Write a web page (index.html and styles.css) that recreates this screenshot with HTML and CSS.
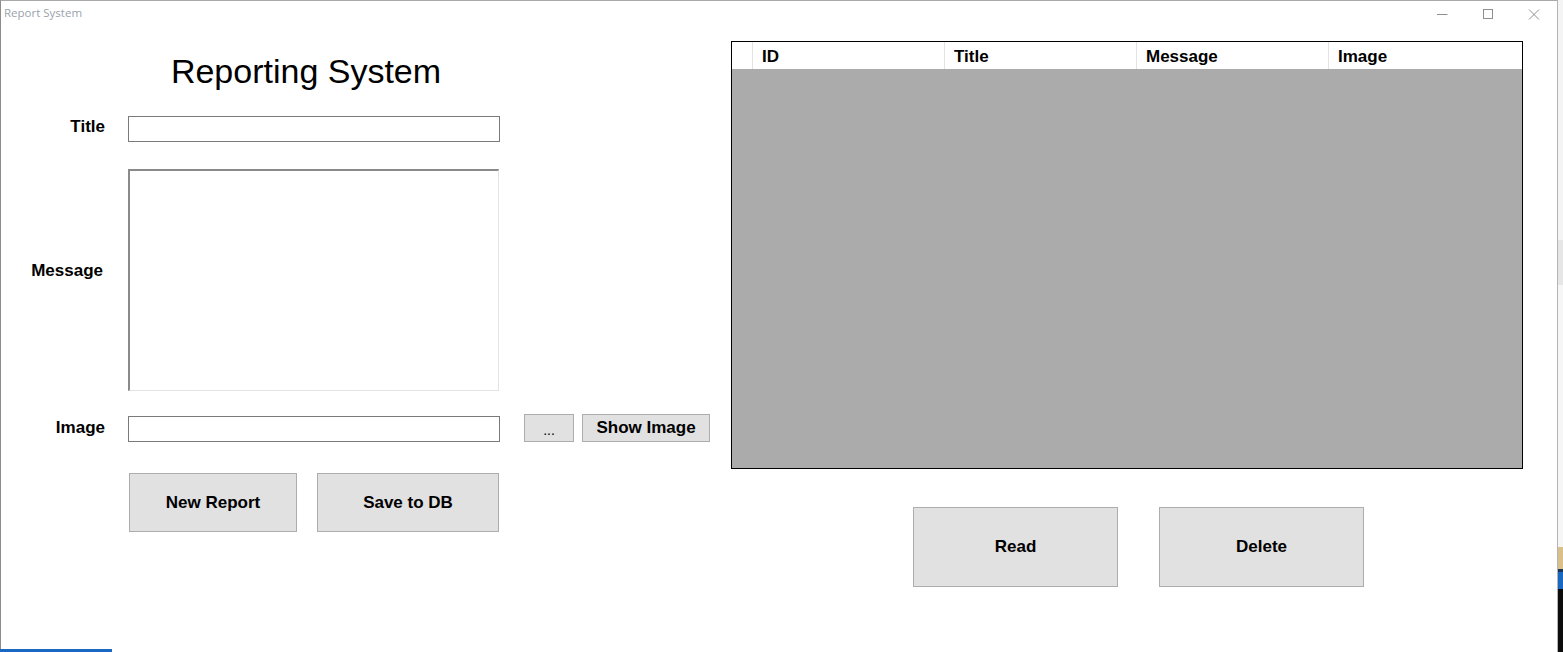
FILE: index.html
```html
<!DOCTYPE html>
<html lang="en">
<head>
<meta charset="utf-8">
<title>Report System</title>
<link rel="stylesheet" href="styles.css">
</head>
<body>
<div class="screen">
  <div class="window">
    <div class="titlebar">
      <span class="app-title">Report System</span>
      <div class="controls">
        <span class="ctl"><svg width="12" height="12" viewBox="0 0 12 12"><path d="M1 6.5h10.5" stroke="#8f8f8f" stroke-width="1" fill="none"/></svg></span>
        <span class="ctl"><svg width="12" height="12" viewBox="0 0 12 12"><rect x="1.5" y="1.5" width="9" height="9" stroke="#8f8f8f" stroke-width="1" fill="none"/></svg></span>
        <span class="ctl"><svg width="12" height="12" viewBox="0 0 12 12"><path d="M1 1.5l10 10M11 1.5l-10 10" stroke="#8f8f8f" stroke-width="1" fill="none"/></svg></span>
      </div>
    </div>
    <div class="client">
      <section class="form-panel">
        <h1 class="heading">Reporting System</h1>
        <div class="row row-title">
          <label class="lbl lbl-title">Title</label>
          <div class="input"></div>
        </div>
        <div class="row row-msg">
          <label class="lbl lbl-msg">Message</label>
          <div class="textarea"></div>
        </div>
        <div class="row row-img">
          <label class="lbl lbl-img">Image</label>
          <div class="input"></div>
          <div class="small-btns">
            <button class="btn btn-dots">...</button>
            <button class="btn btn-show">Show Image</button>
          </div>
        </div>
        <div class="row row-actions">
          <button class="btn btn-new">New Report</button>
          <button class="btn btn-save">Save to DB</button>
        </div>
      </section>
      <section class="grid-panel">
        <div class="datagrid">
          <div class="dg-head">
            <div class="dg-corner"></div>
            <div class="dg-col">ID</div>
            <div class="dg-col">Title</div>
            <div class="dg-col">Message</div>
            <div class="dg-col dg-last">Image</div>
          </div>
          <div class="dg-body"></div>
        </div>
        <div class="grid-actions">
          <button class="btn btn-big">Read</button>
          <button class="btn btn-big">Delete</button>
        </div>
      </section>
    </div>
  </div>
  <div class="desktop-edge">
    <div class="de-a"></div>
    <div class="de-b"></div>
    <div class="de-c"></div>
    <div class="de-d"></div>
    <div class="de-e"></div>
    <div class="de-f"></div>
    <div class="de-g"></div>
  </div>
  <div class="taskbar-hint"></div>
</div>
</body>
</html>
```

FILE: styles.css
```css
* { box-sizing: border-box; }

html, body {
  margin: 0;
  padding: 0;
  background: #ffffff;
}

body {
  width: 1563px;
  height: 652px;
  overflow: hidden;
  font-family: "Liberation Sans", Arial, sans-serif;
  color: #000;
}

.screen {
  position: relative;
  display: flex;
  width: 1563px;
  height: 652px;
}

.window {
  width: 1558px;
  height: 652px;
  border-top: 1px solid #a9a9a9;
  border-left: 1px solid #8c8c8c;
  border-right: 1px solid #b4b4b4;
  background: #fff;
  display: flex;
  flex-direction: column;
}

.titlebar {
  height: 26px;
  display: flex;
  justify-content: space-between;
  align-items: flex-start;
}

.app-title {
  font-family: "Open Sans", "Noto Sans", sans-serif;
  font-size: 11.5px;
  line-height: 23px;
  color: #9aa3ac;
  padding-left: 3px;
}

.controls {
  display: flex;
}

.ctl {
  width: 46px;
  height: 26px;
  display: flex;
  align-items: flex-start;
  justify-content: center;
  padding-top: 7px;
}

.client {
  flex: 1;
  display: flex;
}

/* ---------- form ---------- */
.form-panel {
  width: 730px;
  padding-top: 24px;
}

.heading {
  margin: 0;
  width: 610px;
  text-align: center;
  font-weight: normal;
  font-size: 34px;
  line-height: 40px;
}

.row {
  display: flex;
}

.lbl {
  width: 104px;
  text-align: right;
  font-weight: bold;
  font-size: 17px;
  line-height: 18px;
  margin-right: 23px;
}

.lbl-title {
  margin-top: 2px;
}

.input {
  width: 372px;
  height: 26px;
  border: 1px solid #7a7a7a;
  background: #fff;
}

.row-title {
  margin-top: 25px;
  align-items: flex-start;
}

.row-msg {
  margin-top: 27px;
  align-items: flex-start;
}

.lbl-msg {
  margin-top: 93px;
  width: 102px;
  margin-right: 25px;
}

.textarea {
  width: 371px;
  height: 222px;
  border-top: 2px solid #8a8a8a;
  border-left: 2px solid #8a8a8a;
  border-right: 1px solid #e3e3e3;
  border-bottom: 1px solid #e3e3e3;
  background: #fff;
}

.row-img {
  margin-top: 23px;
  align-items: flex-end;
}

.lbl-img {
  align-self: flex-start;
  margin-top: 5px;
}

.small-btns {
  display: flex;
  gap: 8px;
  margin-left: 24px;
}

.btn {
  font-family: "Liberation Sans", Arial, sans-serif;
  font-weight: bold;
  font-size: 17px;
  color: #000;
  background: #e1e1e1;
  border: 1px solid #adadad;
  padding: 0;
  margin: 0;
  display: flex;
  align-items: center;
  justify-content: center;
}

.btn-dots {
  width: 50px;
  height: 28px;
  font-weight: normal;
  font-size: 14px;
  padding-top: 3px;
}

.btn-show {
  width: 128px;
  height: 28px;
}

.row-actions {
  margin-top: 31px;
  padding-left: 128px;
  gap: 20px;
}

.btn-new {
  width: 168px;
  height: 59px;
}

.btn-save {
  width: 182px;
  height: 59px;
}

/* ---------- grid ---------- */
.grid-panel {
  padding-top: 14px;
}

.datagrid {
  width: 792px;
  height: 428px;
  border: 1px solid #000;
  display: flex;
  flex-direction: column;
}

.dg-head {
  display: flex;
  height: 27px;
  background: #fff;
}

.dg-corner {
  width: 21px;
  border-right: 1px solid #e3e3e3;
}

.dg-col {
  width: 192px;
  border-right: 1px solid #e3e3e3;
  font-weight: bold;
  font-size: 17px;
  line-height: 18px;
  padding: 6px 0 0 9px;
}

.dg-last {
  flex: 1;
  border-right: none;
}

.dg-body {
  flex: 1;
  background: #ababab;
}

.grid-actions {
  display: flex;
  gap: 41px;
  margin-top: 38px;
  padding-left: 182px;
}

.btn-big {
  width: 205px;
  height: 80px;
}

/* ---------- desktop edge ---------- */
.desktop-edge {
  width: 5px;
  height: 652px;
  display: flex;
  flex-direction: column;
}

.de-a { height: 240px; background: #f4f4f4; }
.de-b { height: 45px; background: #e6e6e6; }
.de-c { height: 262px; background: #f6f6f6; }
.de-d { height: 22px; background: #d9c08a; }
.de-e { height: 3px; background: #1c3556; }
.de-f { height: 17px; background: #1b68c0; }
.de-g { flex: 1; background: #0c0c0c; }

.taskbar-hint {
  position: absolute;
  left: 0;
  bottom: 0;
  width: 112px;
  height: 3px;
  background: #1b68c0;
}
```
